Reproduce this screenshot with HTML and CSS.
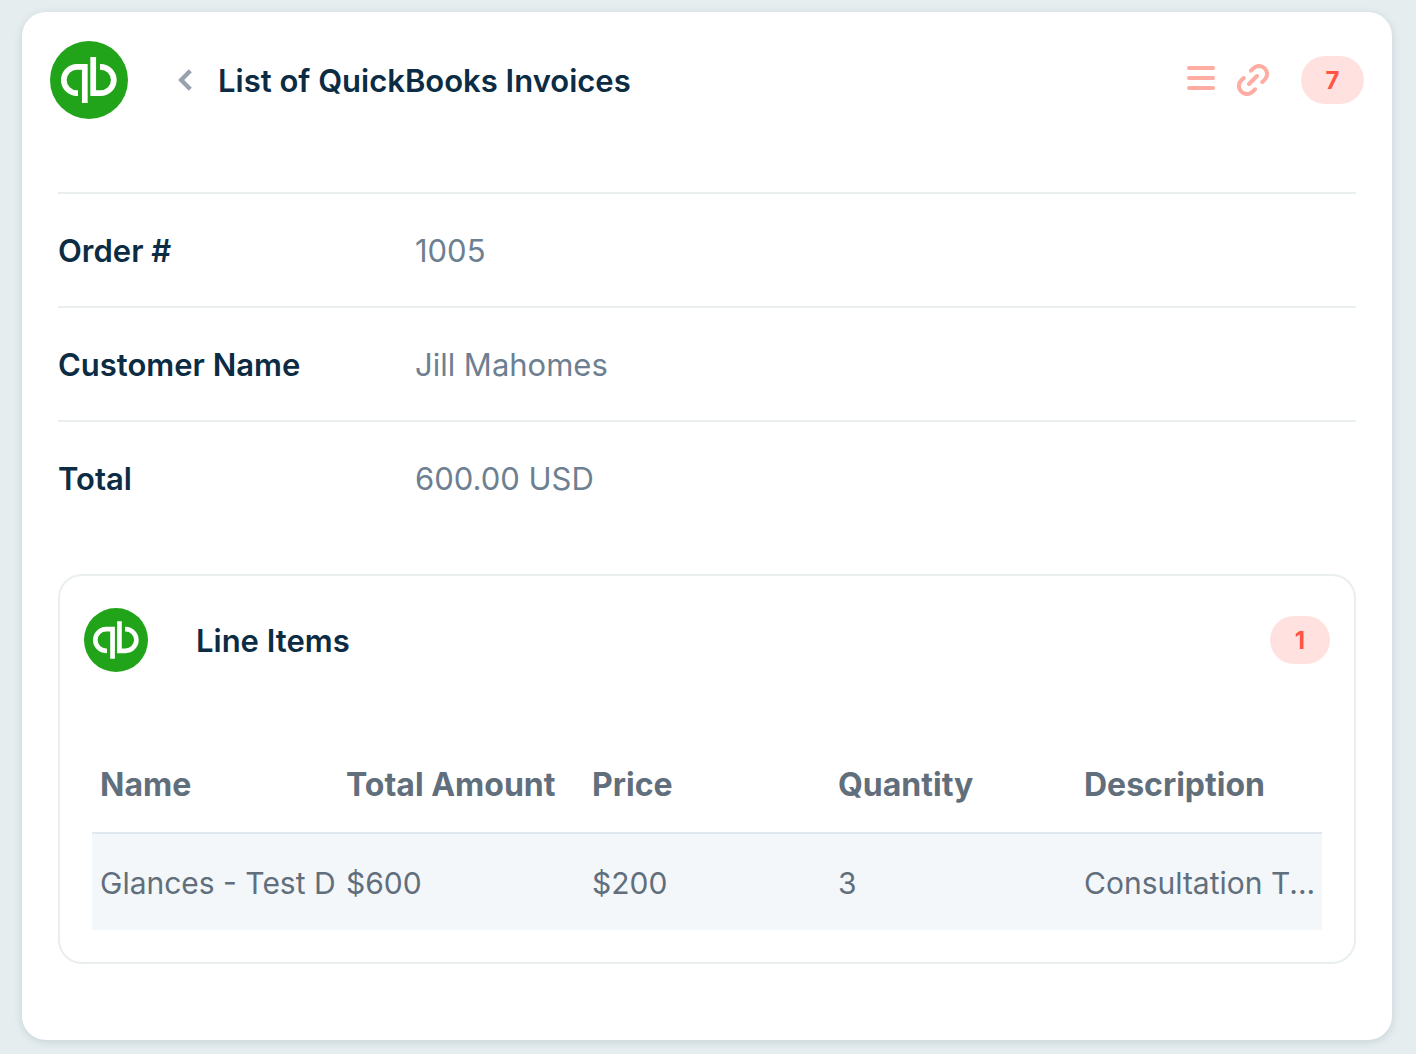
FILE: index.html
```html
<!DOCTYPE html>
<html lang="en">
<head>
<meta charset="utf-8">
<meta name="viewport" content="width=device-width, initial-scale=1">
<title>List of QuickBooks Invoices</title>
<link rel="stylesheet" href="styles.css">
</head>
<body>
<svg class="sprite" aria-hidden="true">
  <symbol id="qb" viewBox="0 0 78 78">
    <circle cx="39" cy="39" r="39" fill="#22a41a"/>
    <g fill="none" stroke="#fff" stroke-width="5.7">
      <path d="M28 52.2H27a13.2 13.2 0 0 1 0-26.4H34.8V62"/>
      <path d="M43.2 16V52.2H50.6a13.2 13.2 0 0 0 0-26.4H50"/>
    </g>
  </symbol>
</svg>
<main class="card">
  <header class="card-header">
    <svg class="logo" role="img" aria-label="QuickBooks"><use href="#qb"/></svg>
    <button class="icon-button back" type="button" aria-label="Back">
      <svg width="14" height="22" viewBox="0 0 14 22" fill="none" stroke="#98a2ae" stroke-width="4.400"><path d="M12.300 1.800L3.200 11l9.100 9.200"/></svg>
    </button>
    <h1 class="title">List of QuickBooks Invoices</h1>
    <div class="actions">
      <button class="icon-button" type="button" aria-label="Menu">
        <svg width="28" height="32" viewBox="0 0 28 32" fill="none" stroke="#ffaca3" stroke-width="4" stroke-linecap="round"><path d="M2 4h24M2 14h24M2 24h24"/></svg>
      </button>
      <button class="icon-button" type="button" aria-label="Copy link">
        <svg width="32" height="32" viewBox="0 0 32 32" fill="none" stroke="#ffaca3" stroke-width="4" stroke-linecap="round"><path d="M14 6.700l2.300-2.400A8 8 0 0 1 27.700 15.700L25.300 18M6.700 14l-2.400 2.300A8 8 0 0 0 15.700 27.700L18 25.300M12 20l8-8"/></svg>
      </button>
    </div>
    <span class="badge badge-wide">7</span>
  </header>

  <dl class="details">
    <div class="detail"><dt>Order #</dt><dd>1005</dd></div>
    <div class="detail"><dt>Customer Name</dt><dd>Jill Mahomes</dd></div>
    <div class="detail"><dt>Total</dt><dd>600.00 USD</dd></div>
  </dl>

  <section class="panel">
    <header class="panel-header">
      <svg class="logo logo-small" role="img" aria-label="QuickBooks"><use href="#qb"/></svg>
      <h2 class="title">Line Items</h2>
      <span class="badge">1</span>
    </header>
    <table class="items">
      <thead>
        <tr><th scope="col">Name</th><th scope="col">Total Amount</th><th scope="col">Price</th><th scope="col">Quantity</th><th scope="col">Description</th></tr>
      </thead>
      <tbody>
        <tr><td>Glances - Test D</td><td>$600</td><td>$200</td><td>3</td><td>Consultation T...</td></tr>
      </tbody>
    </table>
  </section>
</main>
</body>
</html>
```
FILE: styles.css
```css
* { box-sizing: border-box; }

body {
  margin: 0;
  padding: 12px 24px 14px 22px;
  background: #e5edef;
  color: #0c2c44;
  font: 400 31px/40px Inter, "Liberation Sans", sans-serif;
}

.sprite { display: none; }

.card {
  padding-bottom: 76px;
  border-radius: 24px;
  background: #fff;
  box-shadow: 0 2px 8px rgba(20, 60, 80, 0.14);
}

.card-header {
  display: flex;
  align-items: center;
  padding: 29px 28px 0;
}

.logo { flex: none; width: 78px; height: 78px; }
.logo-small { width: 64px; height: 64px; }

.title {
  margin: 0;
  padding-top: 2px;
  font-size: 31px;
  line-height: 40px;
  font-weight: 600;
}

.icon-button {
  display: block;
  padding: 0;
  border: 0;
  background: none;
  cursor: pointer;
}
.icon-button svg { display: block; }

.back { margin: 0 26px 0 50px; }

.actions {
  display: flex;
  gap: 22px;
  margin-left: auto;
  margin-right: 32px;
}

.badge {
  width: 60px;
  padding-top: 2px;
  border-radius: 24px;
  background: #ffe2e0;
  color: #ff5545;
  font-size: 24px;
  line-height: 46px;
  font-weight: 700;
  text-align: center;
}
.badge-wide { width: 63px; }

.details { margin: 73px 36px 40px; }

.detail {
  display: grid;
  grid-template-columns: 11fr 29fr;
  padding: 37px 0 35px;
  border-top: 2px solid #e9eeee;
}
.detail dt { font-weight: 600; }
.detail dd { margin: 0; color: #6d8091; }

.panel {
  margin: 0 36px;
  padding: 32px 0;
  border: 2px solid #e9eeee;
  border-radius: 24px;
}

.panel-header {
  display: flex;
  align-items: center;
  gap: 48px;
  padding: 0 24px;
}
.panel-header .badge { margin-left: auto; }

.items {
  width: calc(100% - 64px);
  margin: 64px 32px 0;
  table-layout: fixed;
  border-spacing: 0;
  color: #616e7c;
}
.items th,
.items td {
  padding: 29px 0 27px 8px;
  overflow: hidden;
  text-align: left;
  white-space: nowrap;
}
.items th {
  border-bottom: 2px solid #e1e7ee;
  font-size: 32px;
  font-weight: 700;
}
.items td {
  background: #f3f7fa;
  font-size: 30px;
}
```
